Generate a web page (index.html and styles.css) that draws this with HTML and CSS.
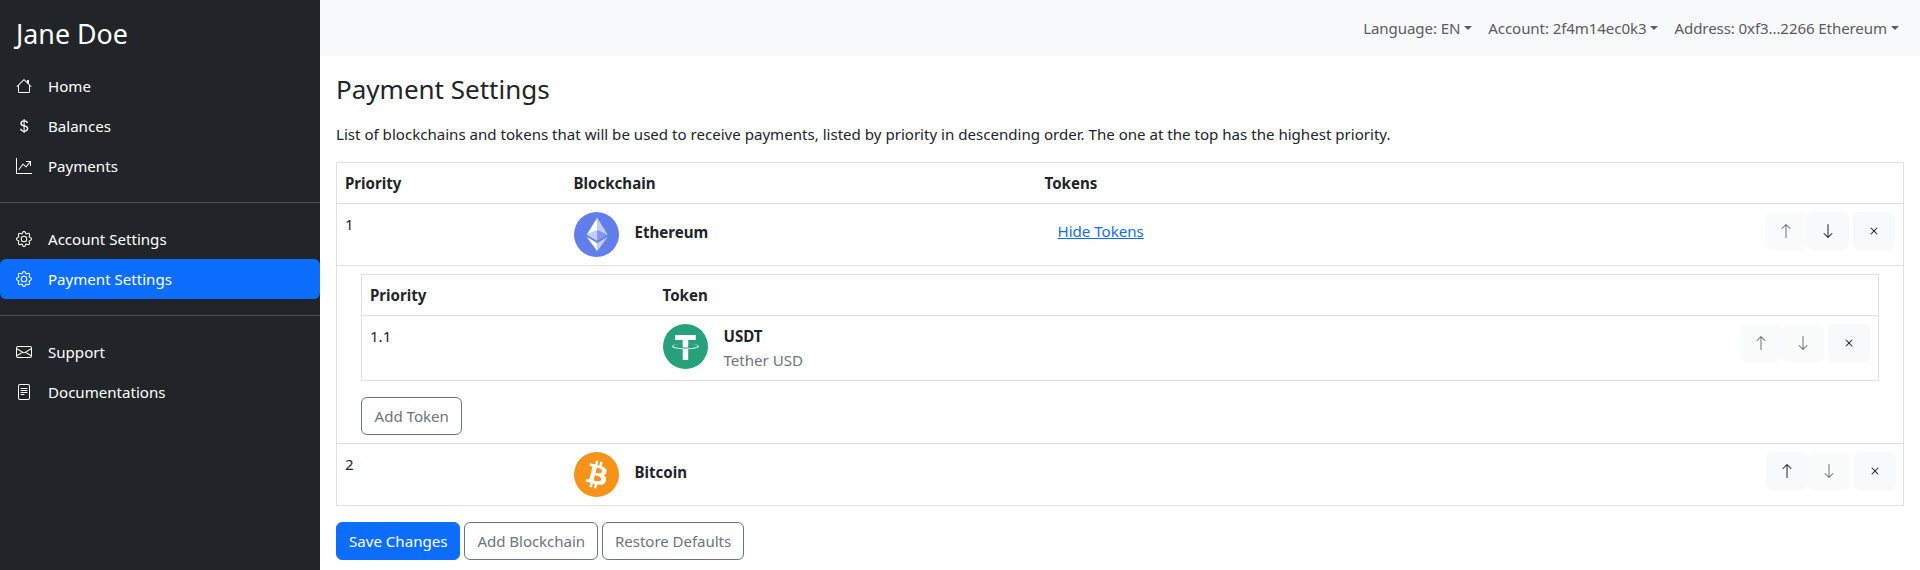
FILE: index.html
```html
<!DOCTYPE html>
<html lang="en">
<head>
    <meta charset="UTF-8">
    <meta name="viewport" content="width=device-width, initial-scale=1.0">
    <title>Payment Settings</title>
    <link rel="stylesheet" href="styles.css">
</head>
<body>

    <!-- ======= Icon sprite ======= -->
    <svg class="sprite" xmlns="http://www.w3.org/2000/svg">
        <symbol id="i-house" viewBox="0 0 16 16">
            <path fill-rule="evenodd" d="M2 13.5V7h1v6.5a.5.5 0 0 0 .5.5h9a.5.5 0 0 0 .5-.5V7h1v6.5a1.5 1.5 0 0 1-1.5 1.5h-9A1.5 1.5 0 0 1 2 13.5zm11-11V6l-2-2V2.5a.5.5 0 0 1 .5-.5h1a.5.5 0 0 1 .5.5z"/>
            <path fill-rule="evenodd" d="M7.293 1.5a1 1 0 0 1 1.414 0l6.647 6.646a.5.5 0 0 1-.708.708L8 2.207 1.354 8.854a.5.5 0 1 1-.708-.708L7.293 1.5z"/>
        </symbol>
        <symbol id="i-dollar" viewBox="0 0 16 16">
            <path d="M4 10.781c.148 1.667 1.513 2.85 3.591 3.003V15h1.043v-1.216c2.27-.179 3.678-1.438 3.678-3.3 0-1.59-.947-2.51-2.956-3.028l-.722-.187V3.467c1.122.11 1.879.714 2.07 1.616h1.47c-.166-1.6-1.54-2.748-3.54-2.875V1H7.591v1.233c-1.939.23-3.27 1.472-3.27 3.156 0 1.454.966 2.483 2.661 2.917l.61.162v4.031c-1.149-.17-1.94-.8-2.131-1.718H4zm3.391-3.836c-1.043-.263-1.6-.825-1.6-1.616 0-.944.704-1.641 1.8-1.828v3.495l-.2-.05zm1.591 1.872c1.287.323 1.852.859 1.852 1.769 0 1.097-.826 1.828-2.2 1.939V8.73l.348.086z"/>
        </symbol>
        <symbol id="i-graph" viewBox="0 0 16 16">
            <path fill-rule="evenodd" d="M0 0h1v15h15v1H0V0zm10 3.5a.5.5 0 0 1 .5-.5h4a.5.5 0 0 1 .5.5v4a.5.5 0 0 1-1 0V4.9l-3.613 4.417a.5.5 0 0 1-.74.037L7.06 6.767l-3.656 5.027a.5.5 0 0 1-.808-.588l4-5.5a.5.5 0 0 1 .758-.06l2.609 2.61L13.445 4H10.5a.5.5 0 0 1-.5-.5z"/>
        </symbol>
        <symbol id="i-gear" viewBox="0 0 16 16">
            <path d="M8 4.754a3.246 3.246 0 1 0 0 6.492 3.246 3.246 0 0 0 0-6.492zM5.754 8a2.246 2.246 0 1 1 4.492 0 2.246 2.246 0 0 1-4.492 0z"/>
            <path d="M9.796 1.343c-.527-1.79-3.065-1.79-3.592 0l-.094.319a.873.873 0 0 1-1.255.52l-.292-.16c-1.64-.892-3.433.902-2.54 2.541l.159.292a.873.873 0 0 1-.52 1.255l-.319.094c-1.79.527-1.79 3.065 0 3.592l.319.094a.873.873 0 0 1 .52 1.255l-.16.292c-.892 1.64.901 3.434 2.541 2.54l.292-.159a.873.873 0 0 1 1.255.52l.094.319c.527 1.79 3.065 1.79 3.592 0l.094-.319a.873.873 0 0 1 1.255-.52l.292.16c1.64.893 3.434-.902 2.54-2.541l-.159-.292a.873.873 0 0 1 .52-1.255l.319-.094c1.79-.527 1.79-3.065 0-3.592l-.319-.094a.873.873 0 0 1-.52-1.255l.16-.292c.893-1.64-.902-3.433-2.541-2.54l-.292.159a.873.873 0 0 1-1.255-.52l-.094-.319zm-2.633.283c.246-.835 1.428-.835 1.674 0l.094.319a1.873 1.873 0 0 0 2.693 1.115l.291-.16c.764-.415 1.6.42 1.184 1.185l-.159.292a1.873 1.873 0 0 0 1.116 2.692l.318.094c.835.246.835 1.428 0 1.674l-.319.094a1.873 1.873 0 0 0-1.115 2.693l.16.291c.415.764-.42 1.6-1.185 1.184l-.291-.159a1.873 1.873 0 0 0-2.693 1.116l-.094.318c-.246.835-1.428.835-1.674 0l-.094-.319a1.873 1.873 0 0 0-2.692-1.115l-.292.16c-.764.415-1.6-.42-1.184-1.185l.159-.291A1.873 1.873 0 0 0 1.945 8.93l-.319-.094c-.835-.246-.835-1.428 0-1.674l.319-.094A1.873 1.873 0 0 0 3.06 4.377l-.16-.292c-.415-.764.42-1.6 1.185-1.184l.292.159a1.873 1.873 0 0 0 2.692-1.115l.094-.319z"/>
        </symbol>
        <symbol id="i-envelope" viewBox="0 0 16 16">
            <path d="M0 4a2 2 0 0 1 2-2h12a2 2 0 0 1 2 2v8a2 2 0 0 1-2 2H2a2 2 0 0 1-2-2V4Zm2-1a1 1 0 0 0-1 1v.217l7 4.2 7-4.2V4a1 1 0 0 0-1-1H2Zm13 2.383-4.708 2.825L15 11.105V5.383Zm-.034 6.876-5.64-3.471L8 9.583l-1.326-.795-5.64 3.47A1 1 0 0 0 2 13h12a1 1 0 0 0 .966-.741ZM1 11.105l4.708-2.897L1 5.383v5.722Z"/>
        </symbol>
        <symbol id="i-file" viewBox="0 0 16 16">
            <path d="M5 4a.5.5 0 0 0 0 1h6a.5.5 0 0 0 0-1H5zm-.5 2.5A.5.5 0 0 1 5 6h6a.5.5 0 0 1 0 1H5a.5.5 0 0 1-.5-.5zM5 8a.5.5 0 0 0 0 1h6a.5.5 0 0 0 0-1H5zm0 2a.5.5 0 0 0 0 1h3a.5.5 0 0 0 0-1H5z"/>
            <path d="M2 2a2 2 0 0 1 2-2h8a2 2 0 0 1 2 2v12a2 2 0 0 1-2 2H4a2 2 0 0 1-2-2V2zm10-1H4a1 1 0 0 0-1 1v12a1 1 0 0 0 1 1h8a1 1 0 0 0 1-1V2a1 1 0 0 0-1-1z"/>
        </symbol>
        <symbol id="i-up" viewBox="0 0 16 16">
            <path fill-rule="evenodd" d="M8 15a.5.5 0 0 0 .5-.5V2.707l3.146 3.147a.5.5 0 0 0 .708-.708l-4-4a.5.5 0 0 0-.708 0l-4 4a.5.5 0 1 0 .708.708L7.5 2.707V14.5a.5.5 0 0 0 .5.5z"/>
        </symbol>
        <symbol id="i-down" viewBox="0 0 16 16">
            <path fill-rule="evenodd" d="M8 1a.5.5 0 0 1 .5.5v11.793l3.146-3.147a.5.5 0 0 1 .708.708l-4 4a.5.5 0 0 1-.708 0l-4-4a.5.5 0 0 1 .708-.708L7.5 13.293V1.5A.5.5 0 0 1 8 1z"/>
        </symbol>
        <symbol id="i-x" viewBox="0 0 16 16">
            <path d="M4.646 4.646a.5.5 0 0 1 .708 0L8 7.293l2.646-2.647a.5.5 0 0 1 .708.708L8.707 8l2.647 2.646a.5.5 0 0 1-.708.708L8 8.707l-2.646 2.647a.5.5 0 0 1-.708-.708L7.293 8 4.646 5.354a.5.5 0 0 1 0-.708z"/>
        </symbol>
        <symbol id="coin-eth" viewBox="0 0 32 32">
            <circle cx="16" cy="16" r="16" fill="#627EEA"/>
            <path fill="#FFF" fill-opacity=".602" d="M16.498 4v8.87l7.497 3.35z"/>
            <path fill="#FFF" d="M16.498 4L9 16.22l7.498-3.35z"/>
            <path fill="#FFF" fill-opacity=".602" d="M16.498 21.968v6.027L24 17.616z"/>
            <path fill="#FFF" d="M16.498 27.995v-6.028L9 17.616z"/>
            <path fill="#FFF" fill-opacity=".2" d="M16.498 20.573l7.497-4.353-7.497-3.348z"/>
            <path fill="#FFF" fill-opacity=".602" d="M9 16.22l7.498 4.353v-7.701z"/>
        </symbol>
        <symbol id="coin-usdt" viewBox="0 0 32 32">
            <circle cx="16" cy="16" r="16" fill="#26A17B"/>
            <path fill="#FFF" fill-rule="evenodd" d="M17.922 17.383v-.002c-.11.008-.677.042-1.942.042-1.01 0-1.721-.03-1.971-.042v.003c-3.888-.171-6.79-.848-6.79-1.658 0-.809 2.902-1.486 6.79-1.66v2.644c.254.018.982.061 1.988.061 1.207 0 1.812-.05 1.925-.06v-2.643c3.88.173 6.775.85 6.775 1.658 0 .81-2.895 1.485-6.775 1.657m0-3.59v-2.366h5.414V7.819H8.595v3.608h5.414v2.365c-4.4.202-7.709 1.074-7.709 2.118 0 1.044 3.309 1.915 7.709 2.118v7.582h3.913v-7.584c4.393-.202 7.694-1.073 7.694-2.116 0-1.043-3.301-1.914-7.694-2.117"/>
        </symbol>
        <symbol id="coin-btc" viewBox="0 0 32 32">
            <circle cx="16" cy="16" r="16" fill="#F7931A"/>
            <path fill="#FFF" fill-rule="evenodd" d="M23.189 14.02c.314-2.096-1.283-3.223-3.465-3.975l.708-2.84-1.728-.43-.69 2.765c-.454-.114-.92-.22-1.385-.326l.695-2.783L15.596 6l-.708 2.839c-.376-.086-.746-.17-1.104-.26l.002-.009-2.384-.595-.46 1.846s1.283.294 1.256.312c.7.175.826.638.805 1.006l-.806 3.235c.048.012.11.03.18.057l-.183-.045-1.13 4.532c-.086.212-.303.531-.793.41.018.025-1.256-.313-1.256-.313l-.858 1.978 2.25.561c.418.105.828.215 1.231.318l-.715 2.872 1.727.43.708-2.84c.472.127.93.245 1.378.357l-.706 2.828 1.728.43.715-2.866c2.948.558 5.164.333 6.097-2.333.752-2.146-.037-3.385-1.588-4.192 1.13-.26 1.98-1.003 2.207-2.538zm-3.95 5.538c-.533 2.147-4.148.986-5.32.695l.95-3.805c1.172.293 4.929.872 4.37 3.11zm.535-5.569c-.487 1.953-3.495.96-4.47.717l.86-3.45c.975.243 4.118.696 3.61 2.733z"/>
        </symbol>
    </svg>

    <div class="layout">

        <!-- ======= Sidebar ======= -->
        <aside class="sidebar">
            <div class="brand">Jane Doe</div>
            <nav class="side-nav">
                <a class="side-link" href="#"><svg class="icon"><use href="#i-house"/></svg>Home</a>
                <a class="side-link" href="#"><svg class="icon"><use href="#i-dollar"/></svg>Balances</a>
                <a class="side-link" href="#"><svg class="icon"><use href="#i-graph"/></svg>Payments</a>
            </nav>
            <hr class="side-rule">
            <nav class="side-nav">
                <a class="side-link" href="#"><svg class="icon"><use href="#i-gear"/></svg>Account Settings</a>
                <a class="side-link active" href="#"><svg class="icon"><use href="#i-gear"/></svg>Payment Settings</a>
            </nav>
            <hr class="side-rule">
            <nav class="side-nav">
                <a class="side-link" href="#"><svg class="icon"><use href="#i-envelope"/></svg>Support</a>
                <a class="side-link" href="#"><svg class="icon"><use href="#i-file"/></svg>Documentations</a>
            </nav>
        </aside>

        <div class="page">

            <!-- ======= Top bar ======= -->
            <header class="topbar">
                <a class="top-link" href="#">Language: EN</a>
                <a class="top-link" href="#">Account: 2f4m14ec0k3</a>
                <a class="top-link" href="#">Address: 0xf3...2266 Ethereum</a>
            </header>

            <!-- ======= Main Content ======= -->
            <main class="content">
                <h3 class="title">Payment Settings</h3>
                <p class="intro">List of blockchains and tokens that will be used to receive payments, listed by priority in descending order. The one at the top has the highest priority.</p>

                <table class="grid chains">
                    <colgroup>
                        <col class="col-priority">
                        <col class="col-chain">
                        <col>
                        <col class="col-actions">
                    </colgroup>
                    <thead>
                        <tr>
                            <th>Priority</th>
                            <th>Blockchain</th>
                            <th>Tokens</th>
                            <th></th>
                        </tr>
                    </thead>
                    <tbody>
                        <tr>
                            <td>1</td>
                            <td>
                                <div class="asset">
                                    <svg class="coin"><use href="#coin-eth"/></svg>
                                    <b class="asset-name">Ethereum</b>
                                </div>
                            </td>
                            <td><a class="tokens-link" href="#">Hide Tokens</a></td>
                            <td>
                                <div class="actions">
                                    <button class="act" disabled><svg class="icon"><use href="#i-up"/></svg></button>
                                    <button class="act"><svg class="icon"><use href="#i-down"/></svg></button>
                                    <button class="act act-remove"><svg class="icon"><use href="#i-x"/></svg></button>
                                </div>
                            </td>
                        </tr>
                        <tr>
                            <td class="tokens-cell" colspan="4">
                                <table class="grid tokens">
                                    <colgroup>
                                        <col class="col-token-priority">
                                        <col>
                                        <col class="col-actions">
                                    </colgroup>
                                    <thead>
                                        <tr>
                                            <th>Priority</th>
                                            <th>Token</th>
                                            <th></th>
                                        </tr>
                                    </thead>
                                    <tbody>
                                        <tr>
                                            <td>1.1</td>
                                            <td>
                                                <div class="asset">
                                                    <svg class="coin"><use href="#coin-usdt"/></svg>
                                                    <div class="asset-text">
                                                        <b class="asset-name">USDT</b>
                                                        <span class="asset-sub">Tether USD</span>
                                                    </div>
                                                </div>
                                            </td>
                                            <td>
                                                <div class="actions">
                                                    <button class="act" disabled><svg class="icon"><use href="#i-up"/></svg></button>
                                                    <button class="act" disabled><svg class="icon"><use href="#i-down"/></svg></button>
                                                    <button class="act act-remove"><svg class="icon"><use href="#i-x"/></svg></button>
                                                </div>
                                            </td>
                                        </tr>
                                    </tbody>
                                </table>
                                <button class="btn btn-outline">Add Token</button>
                            </td>
                        </tr>
                        <tr>
                            <td>2</td>
                            <td>
                                <div class="asset">
                                    <svg class="coin"><use href="#coin-btc"/></svg>
                                    <b class="asset-name">Bitcoin</b>
                                </div>
                            </td>
                            <td></td>
                            <td>
                                <div class="actions actions-last">
                                    <button class="act"><svg class="icon"><use href="#i-up"/></svg></button>
                                    <button class="act" disabled><svg class="icon"><use href="#i-down"/></svg></button>
                                    <button class="act act-remove"><svg class="icon"><use href="#i-x"/></svg></button>
                                </div>
                            </td>
                        </tr>
                    </tbody>
                </table>

                <div class="footer-btns">
                    <button class="btn btn-primary">Save Changes</button>
                    <button class="btn btn-outline">Add Blockchain</button>
                    <button class="btn btn-outline">Restore Defaults</button>
                </div>
            </main>
        </div>
    </div>
</body>
</html>
```

FILE: styles.css
```css
* {
    box-sizing: border-box;
}

body {
    margin: 0;
    font-family: "Noto Sans", sans-serif;
    font-size: 15.09px;
    line-height: 24px;
    color: #212529;
    background-color: #fff;
}

a {
    text-decoration: none;
}

.sprite {
    display: none;
}

.icon {
    width: 16px;
    height: 16px;
    fill: currentColor;
    flex: none;
}

.layout {
    display: flex;
    min-height: 100vh;
}

/* sidebar */
.sidebar {
    width: 320px;
    flex: none;
    background-color: #212529;
    color: #fff;
}

.brand {
    height: 66px;
    padding: 2px 16px 0;
    display: flex;
    align-items: center;
    font-size: 26.8px;
}

.side-link {
    display: flex;
    align-items: center;
    gap: 16px;
    height: 40px;
    padding: 0 16px;
    color: #fff;
    border-radius: 6px;
}

.side-link.active {
    background-color: #0d6efd;
}

.side-rule {
    height: 1px;
    margin: 16px 0;
    border: none;
    background-color: #4d5154;
}

/* top bar */
.page {
    flex: 1;
    min-width: 0;
}

.topbar {
    height: 56px;
    padding: 0 13px 0 0;
    display: flex;
    align-items: center;
    justify-content: flex-end;
    background-color: #f8f9fa;
}

.top-link {
    display: flex;
    align-items: center;
    padding: 8px;
    color: #595c5f;
    letter-spacing: -0.1px;
}

.top-link::after {
    content: "";
    margin-left: 4px;
    border-top: 4px solid;
    border-left: 4px solid transparent;
    border-right: 4px solid transparent;
}

/* main */
.content {
    padding: 16px;
}

.title {
    margin: 0 0 16px;
    font-size: 26px;
    font-weight: 400;
    line-height: 34px;
}

.intro {
    margin: 0 0 16px;
}

.grid {
    width: 100%;
    border-collapse: collapse;
    table-layout: fixed;
    border-left: 1px solid #dee2e6;
    border-right: 1px solid #dee2e6;
}

.grid th,
.grid td {
    padding: 8px;
    border: 1px solid #dee2e6;
    border-left: none;
    border-right: none;
    text-align: left;
    vertical-align: top;
}

.grid th {
    font-weight: 700;
}

.col-priority {
    width: 229px;
}

.col-chain {
    width: 471px;
}

.col-token-priority {
    width: 293px;
}

.col-actions {
    width: 160px;
}

.asset {
    display: flex;
    align-items: flex-start;
    gap: 16px;
}

.coin {
    width: 45px;
    height: 45px;
    flex: none;
}

.asset > .asset-name {
    padding-top: 8px;
}

.asset-name {
    display: block;
}

.asset-sub {
    display: block;
    color: #6c757d;
}

.tokens-link {
    display: inline-block;
    padding: 7px 12px 7px 13px;
    color: #0d6efd;
    text-decoration: underline;
}

.grid td.tokens-cell {
    padding: 8px 24px;
}

.tokens-cell .grid {
    margin-bottom: 16px;
}

.actions {
    display: flex;
    justify-content: flex-end;
}

.actions-last {
    margin-right: -1px;
}

.act {
    display: flex;
    align-items: center;
    justify-content: center;
    width: 42px;
    height: 38px;
    padding: 0;
    border: none;
    border-radius: 6px;
    background-color: #f8f9fa;
    color: #212529;
}

.act:disabled {
    opacity: 0.65;
}

.act-remove {
    margin-left: 4px;
}

.btn {
    height: 38px;
    padding: 0 12px;
    border: 1px solid #6c757d;
    border-radius: 6px;
    background-color: #fff;
    color: #6c757d;
    font: inherit;
}

.tokens-cell .btn {
    padding: 0 12.5px;
}

.btn-primary {
    border-color: #0d6efd;
    background-color: #0d6efd;
    color: #fff;
}

.footer-btns {
    display: flex;
    gap: 4px;
    margin-top: 16px;
}

.footer-btns .btn-outline {
    letter-spacing: -0.06px;
}
```
